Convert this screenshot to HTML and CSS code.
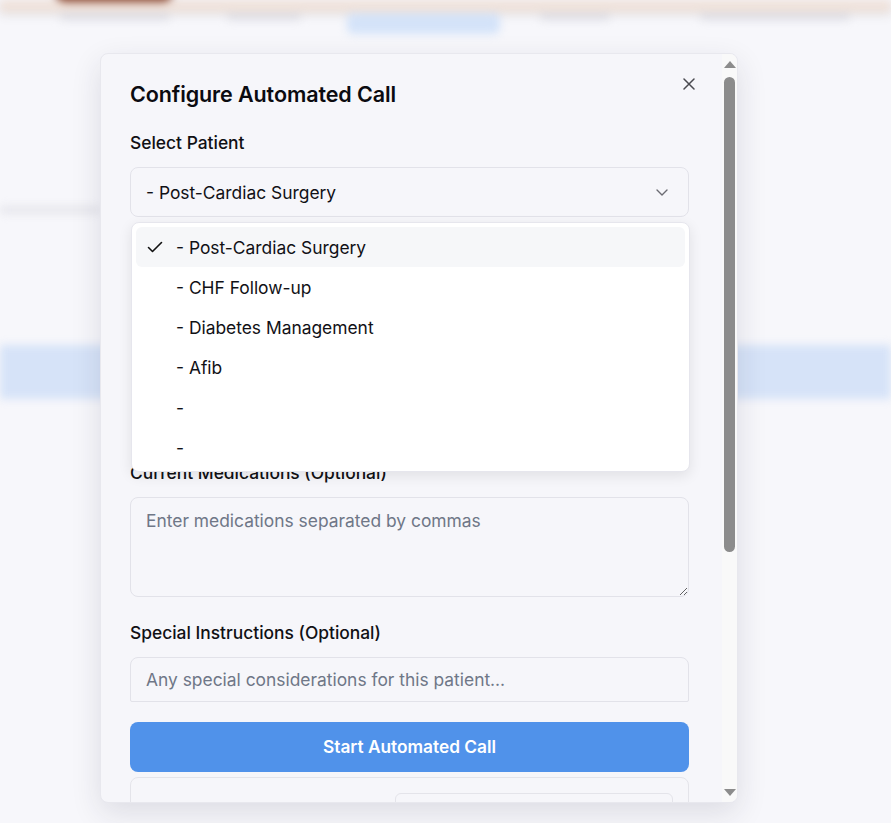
FILE: index.html
```html
<!DOCTYPE html>
<html lang="en">
<head>
<meta charset="utf-8">
<title>Configure Automated Call</title>
<link rel="stylesheet" href="styles.css">
</head>
<body>
<div class="page">
  <div class="backdrop" aria-hidden="true">
    <header class="topbar"><span class="brand-pill"></span></header>
    <nav class="tabs">
      <span class="tab tab-a"></span>
      <span class="tab tab-b"></span>
      <span class="tab tab-active"></span>
      <span class="tab tab-c"></span>
      <span class="tab tab-d"></span>
    </nav>
    <div class="bg-line"></div>
    <div class="bg-band"></div>
  </div>

  <div class="modal">
    <div class="modal-body">
      <button class="close" aria-label="Close">
        <svg width="12" height="12" viewBox="0 0 12 12"><path d="M1 1L11 11M11 1L1 11" stroke="#4a4a50" stroke-width="1.5" stroke-linecap="round" fill="none"/></svg>
      </button>
      <h2 class="title">Configure Automated Call</h2>

      <div class="field field-open">
        <label class="label">Select Patient</label>
        <div class="select-wrap">
          <div class="select">
            <span>- Post-Cardiac Surgery</span>
            <svg class="chev" width="12" height="7" viewBox="0 0 12 7"><path d="M1 1L6 6L11 1" stroke="#6b6b72" stroke-width="1.4" fill="none" stroke-linecap="round" stroke-linejoin="round"/></svg>
          </div>
          <ul class="dropdown">
            <li class="option selected">
              <svg class="check" width="16" height="16" viewBox="0 0 16 16"><path d="M1.5 8.5L5.5 12.5L14.5 3.5" stroke="#111" stroke-width="1.6" fill="none" stroke-linecap="round" stroke-linejoin="round"/></svg>
              - Post-Cardiac Surgery
            </li>
            <li class="option">- CHF Follow-up</li>
            <li class="option">- Diabetes Management</li>
            <li class="option">- Afib</li>
            <li class="option">-</li>
            <li class="option">-</li>
          </ul>
        </div>
      </div>

      <div class="field">
        <label class="label">Current Medications (Optional)</label>
        <textarea class="textarea" placeholder="Enter medications separated by commas"></textarea>
      </div>

      <div class="field">
        <label class="label">Special Instructions (Optional)</label>
        <input class="input" type="text" placeholder="Any special considerations for this patient...">
      </div>

      <button class="primary">Start Automated Call</button>

      <div class="summary"><div class="summary-inner"></div></div>
    </div>

    <div class="scrollbar" aria-hidden="true">
      <div class="sb-btn"><span class="tri-up"></span></div>
      <div class="sb-thumb"></div>
      <div class="sb-fill"></div>
      <div class="sb-btn"><span class="tri-down"></span></div>
    </div>
  </div>
</div>
</body>
</html>
```

FILE: styles.css
```css
html, body {
  margin: 0;
  padding: 0;
}
body {
  background: #f7f7fb;
  font-family: Inter, "Noto Sans", "Liberation Sans", sans-serif;
  color: #0d0d12;
}
.page {
  position: relative;
  height: 823px;
  overflow: hidden;
}

/* blurred page behind the modal */
.backdrop {
  filter: blur(4px);
}
.topbar {
  height: 12px;
  background: #f0e2da;
  box-shadow: 0 2px 6px rgba(0, 0, 0, 0.14);
  display: flex;
  align-items: flex-start;
  padding-left: 55px;
}
.brand-pill {
  width: 118px;
  height: 20px;
  margin-top: -18px;
  border-radius: 10px;
  background: #8b4a35;
}
.tabs {
  display: flex;
  align-items: flex-start;
  height: 24px;
  padding-left: 60px;
}
.tab {
  height: 7px;
  margin-top: 1px;
  border-radius: 3px;
  background: #dcdce3;
}
.tab-a { width: 110px; }
.tab-b { width: 74px; margin-left: 57px; }
.tab-active {
  width: 153px;
  height: 21px;
  margin-top: 1px;
  margin-left: 46px;
  background: #d4e3f9;
  border-radius: 6px;
}
.tab-c { width: 70px; margin-left: 40px; }
.tab-d { width: 150px; margin-left: 90px; }
.bg-line {
  width: 100px;
  height: 8px;
  margin-top: 170px;
  background: #e6e6ec;
  border-radius: 3px;
}
.bg-band {
  height: 54px;
  margin-top: 131px;
  background: #d6e3f8;
}

/* modal */
.modal {
  position: absolute;
  left: 100px;
  top: 53px;
  width: 638px;
  height: 750px;
  box-sizing: border-box;
  border: 1px solid #e8e8ee;
  border-radius: 8px;
  background: #f6f6fa;
  box-shadow: 0 10px 30px rgba(30, 30, 60, 0.12);
  display: flex;
  overflow: hidden;
}
.modal-body {
  flex: 1;
  position: relative;
  padding: 26px 33px 0 29px;
  overflow: hidden;
}
.close {
  position: absolute;
  top: 24px;
  right: 27px;
  padding: 0;
  border: 0;
  background: none;
  width: 12px;
  height: 12px;
  display: flex;
}
.title {
  margin: 0 0 23px;
  font-size: 21.5px;
  line-height: 28px;
  font-weight: 600;
  color: #0b0b10;
  letter-spacing: -0.1px;
}
.field {
  margin-bottom: 24px;
}
.field-open {
  margin-bottom: 244px;
}
.label {
  display: block;
  font-size: 17.4px;
  line-height: 24px;
  font-weight: 500;
  margin-bottom: 12px;
  color: #101014;
}
.select-wrap {
  position: relative;
}
.select {
  height: 50px;
  box-sizing: border-box;
  border: 1px solid #e2e2e9;
  border-radius: 8px;
  padding: 0 20px 0 15px;
  display: flex;
  align-items: center;
  justify-content: space-between;
  font-size: 17.4px;
  color: #111116;
}
.dropdown {
  position: absolute;
  top: calc(100% + 5px);
  left: 1px;
  right: -1px;
  margin: 0;
  padding: 4px;
  list-style: none;
  background: #ffffff;
  border: 1px solid #e6e6ed;
  border-radius: 8px;
  box-shadow: 0 4px 14px rgba(0, 0, 0, 0.09);
  z-index: 5;
}
.option {
  position: relative;
  height: 40px;
  display: flex;
  align-items: center;
  padding-left: 40px;
  border-radius: 6px;
  font-size: 17.4px;
  color: #111116;
}
.option.selected {
  background: #f6f7f9;
}
.check {
  position: absolute;
  left: 11px;
  top: 12px;
}
.textarea {
  display: block;
  width: 100%;
  height: 100px;
  box-sizing: border-box;
  border: 1px solid #e2e2e9;
  border-radius: 8px;
  padding: 11px 15px;
  font: 17.4px/24px Inter, "Noto Sans", sans-serif;
  background: transparent;
  resize: vertical;
  outline: none;
}
.input {
  display: block;
  width: 100%;
  height: 45px;
  box-sizing: border-box;
  border: 1px solid #e2e2e9;
  border-radius: 8px 8px 2px 2px;
  padding: 0 15px;
  font: 17.4px/24px Inter, "Noto Sans", sans-serif;
  background: transparent;
  outline: none;
}
.textarea::placeholder,
.input::placeholder {
  color: #6f7787;
}
.primary {
  display: block;
  width: 100%;
  height: 50px;
  margin-top: -4px;
  border: 0;
  border-radius: 8px;
  background: #5092ea;
  color: #ffffff;
  font: 600 17.3px/24px Inter, "Noto Sans", sans-serif;
}
.summary {
  margin-top: 5px;
  height: 60px;
  box-sizing: border-box;
  border: 1px solid #e4e4ea;
  border-radius: 8px;
  padding: 15px 15px 0 264px;
}
.summary-inner {
  height: 40px;
  border: 1px solid #e4e4ea;
  border-radius: 6px;
}

/* fake scrollbar */
.scrollbar {
  width: 15px;
  background: #f9f9f9;
  display: flex;
  flex-direction: column;
  align-items: center;
}
.sb-btn {
  height: 20px;
  width: 15px;
  display: flex;
  align-items: center;
  justify-content: center;
}
.tri-up {
  width: 0;
  height: 0;
  border-left: 6px solid transparent;
  border-right: 6px solid transparent;
  border-bottom: 7px solid #8c8c8c;
}
.tri-down {
  width: 0;
  height: 0;
  border-left: 6px solid transparent;
  border-right: 6px solid transparent;
  border-top: 7px solid #8c8c8c;
}
.sb-thumb {
  width: 11px;
  height: 475px;
  margin-top: 3px;
  border-radius: 6px;
  background: #8c8c8c;
}
.sb-fill {
  flex: 1;
}
```
